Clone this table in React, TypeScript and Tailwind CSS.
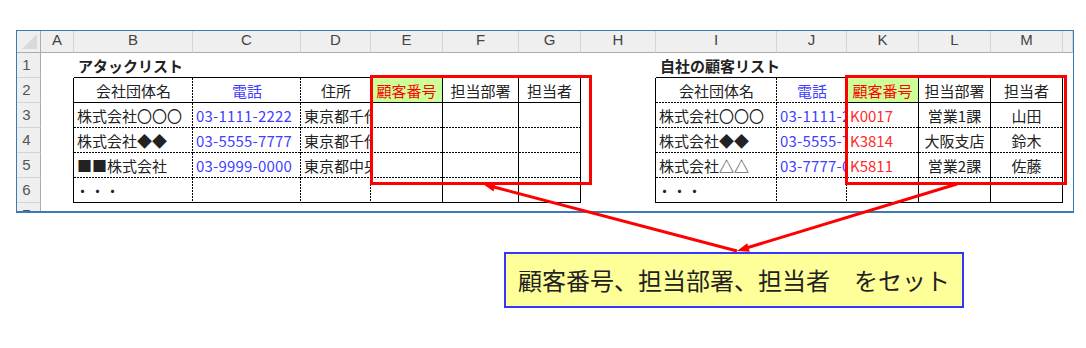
import React from "react";

type Cell = { t?: string; c?: string; r?: "s" | "d"; b?: "s" | "d"; v?: boolean };

// excel style borders: solid lines are real borders, dashed ones are drawn as gradients
const RS = "border-r border-black";
const RD = "bg-[repeating-linear-gradient(180deg,#000_0_2px,transparent_2px_3px)] bg-[length:1px_100%] bg-right bg-no-repeat";
const BS = "border-b border-black";
const BD = "bg-[repeating-linear-gradient(90deg,#000_0_2px,transparent_2px_3px)] bg-[length:100%_1px] bg-bottom bg-no-repeat";

const CTR = "justify-center";
const LFT = "pl-[3px]";
const BLUE = "text-[#3f3fff]";
const TEL = "pl-[3px] text-[#3f3fff] tracking-[0.2px]";
const GREEN = "justify-center text-[#ff0000] bg-[#ccff99]";
const TITLE = "pl-[4px] font-bold";

const leftBody: Cell[][] = [
  [
    { t: "会社団体名", c: CTR },
    { t: "電話", c: `${CTR} ${BLUE}` },
    { t: "住所", c: CTR },
    { t: "顧客番号", c: GREEN },
    { t: "担当部署", c: CTR },
    { t: "担当者", c: CTR },
  ],
  [{ t: "株式会社〇〇〇", c: LFT }, { t: "03-1111-2222", c: TEL }, { t: "東京都千代田区", c: LFT }, {}, {}, {}],
  [{ t: "株式会社◆◆", c: LFT }, { t: "03-5555-7777", c: TEL }, { t: "東京都千代田区", c: LFT }, {}, {}, {}],
  [{ t: "■■株式会社", c: LFT }, { t: "03-9999-0000", c: TEL }, { t: "東京都中央区", c: LFT }, {}, {}, {}],
  [{ t: "・・・", c: "pl-[1px]" }, {}, {}, {}, {}, {}],
];

const rightBody: Cell[][] = [
  [
    { t: "会社団体名", c: CTR },
    { t: "電話", c: `${CTR} ${BLUE}` },
    { t: "顧客番号", c: GREEN },
    { t: "担当部署", c: CTR },
    { t: "担当者", c: CTR },
  ],
  [{ t: "株式会社〇〇〇", c: LFT }, { t: "03-1111-2222", c: TEL }, { t: "K0017", c: `${LFT} text-[#ff2a2a]` }, { t: "営業1課", c: CTR }, { t: "山田", c: CTR }],
  [{ t: "株式会社◆◆", c: LFT }, { t: "03-5555-7777", c: TEL }, { t: "K3814", c: `${LFT} text-[#ff2a2a]` }, { t: "大阪支店", c: CTR }, { t: "鈴木", c: CTR }],
  [{ t: "株式会社△△", c: LFT }, { t: "03-7777-0000", c: TEL }, { t: "K5811", c: `${LFT} text-[#ff2a2a]` }, { t: "営業2課", c: CTR }, { t: "佐藤", c: CTR }],
  [{ t: "・・・", c: "pl-[1px]" }, {}, {}, {}, {}],
];

const leftR: ("s" | "d")[] = ["d", "d", "d", "s", "s", "s"];
const rightR: ("s" | "d")[] = ["d", "d", "s", "s", "s"];
const rightB2: ("s" | "d")[] = ["d", "d", "s", "s", "s"];

const letters = ["A", "B", "C", "D", "E", "F", "G", "H", "I", "J", "K", "L", "M", ""];

function buildRow(r: number): Cell[] {
  const row: Cell[] = Array.from({ length: 14 }, () => ({}));
  if (r === 0) {
    row[1] = { t: "アタックリスト", c: TITLE, v: true };
    row[8] = { t: "自社の顧客リスト", c: TITLE, v: true };
    for (const i of [1, 2, 3, 4, 5, 6, 8, 9, 10, 11, 12]) row[i].b = "s";
  } else if (r <= 5) {
    const bi = r - 1;
    row[0].r = "s";
    row[7].r = "s";
    leftBody[bi].forEach((cell, j) => {
      row[1 + j] = { ...cell, r: leftR[j], b: bi === 0 || bi === 4 ? "s" : "d" };
    });
    rightBody[bi].forEach((cell, j) => {
      row[8 + j] = { ...cell, r: rightR[j], b: bi === 0 ? rightB2[j] : bi === 4 ? "s" : "d" };
    });
  }
  return row;
}

function SheetCell({ cell }: { cell: Cell }) {
  const outer = cell.b === "s" ? BS : cell.b === "d" ? BD : "";
  const inner = cell.r === "s" ? RS : cell.r === "d" ? RD : "";
  return (
    <div className={`min-w-0 ${outer}`}>
      <div
        className={`h-full flex items-center whitespace-nowrap text-[15px] leading-none ${
          cell.v ? "" : "overflow-hidden"
        } ${inner} ${cell.c ?? ""}`}
      >
        {cell.t}
      </div>
    </div>
  );
}

const Sheet = () => (
  <div className="w-[1058px] h-[183px] border border-b-2 border-[#3c7ab6] overflow-hidden">
    <div className="grid grid-cols-[24px_33px_119px_108px_70px_72px_76px_62px_75px_121px_70px_72px_72px_72px_10px] grid-rows-[22px_repeat(7,25px)]">
      {/* corner */}
      <div className="bg-[#efefef] border-r border-b border-r-[#ababab] border-b-[#ababab] flex items-end justify-end pr-[3px] pb-[3px]">
        <svg width="15" height="15" viewBox="0 0 15 15">
          <polygon points="15,0 15,15 0,15" fill="#dadada" />
        </svg>
      </div>
      {letters.map((l, i) => (
        <div
          key={i}
          className="bg-[#efefef] border-r border-b border-r-[#d4d4d4] border-b-[#ababab] flex items-center justify-center pb-[2px] text-[15px] text-[#444] font-['Liberation_Sans',Arial,sans-serif]"
        >
          {l}
        </div>
      ))}
      {Array.from({ length: 7 }, (_, r) => (
        <React.Fragment key={r}>
          <div className="bg-[#efefef] border-r border-b border-r-[#ababab] border-b-[#d4d4d4] flex items-center justify-center pr-[4px] text-[15px] text-[#555] font-['Liberation_Sans',Arial,sans-serif]">
            {r + 1}
          </div>
          {buildRow(r).map((cell, i) => (
            <SheetCell key={i} cell={cell} />
          ))}
        </React.Fragment>
      ))}
    </div>
  </div>
);

export default function App() {
  return (
    <div className="relative w-[1086px] h-[348px] bg-white overflow-hidden pt-[30px] pl-[16px] font-['Noto_Sans_CJK_JP',sans-serif] text-[#222]">
      <Sheet />

      <div className="mt-[39px] ml-[488px] w-[460px] h-[56px] border-2 border-[#3636ff] bg-[#ffff99] flex items-center pl-[12px] text-[24px] leading-none text-[#222]">
        顧客番号、担当部署、担当者　をセット
      </div>

      {/* red highlight boxes */}
      <div className="absolute left-[370px] top-[75px] w-[222px] h-[110px] border-[3px] border-[#ff0000]" />
      <div className="absolute left-[845px] top-[75px] w-[222px] h-[110px] border-[3px] border-[#ff0000]" />

      <svg className="absolute left-0 top-0 pointer-events-none" width="1086" height="348" viewBox="0 0 1086 348">
        <line x1="737" y1="251" x2="494" y2="187" stroke="#ff0000" strokeWidth="3" />
        <polygon points="483,184 495.8,182.7 493.5,191.4" fill="#ff0000" />
        <line x1="957" y1="184" x2="748" y2="247.5" stroke="#ff0000" strokeWidth="3" />
        <polygon points="737,251 747.2,243.2 749.8,251.8" fill="#ff0000" />
      </svg>
    </div>
  );
}
